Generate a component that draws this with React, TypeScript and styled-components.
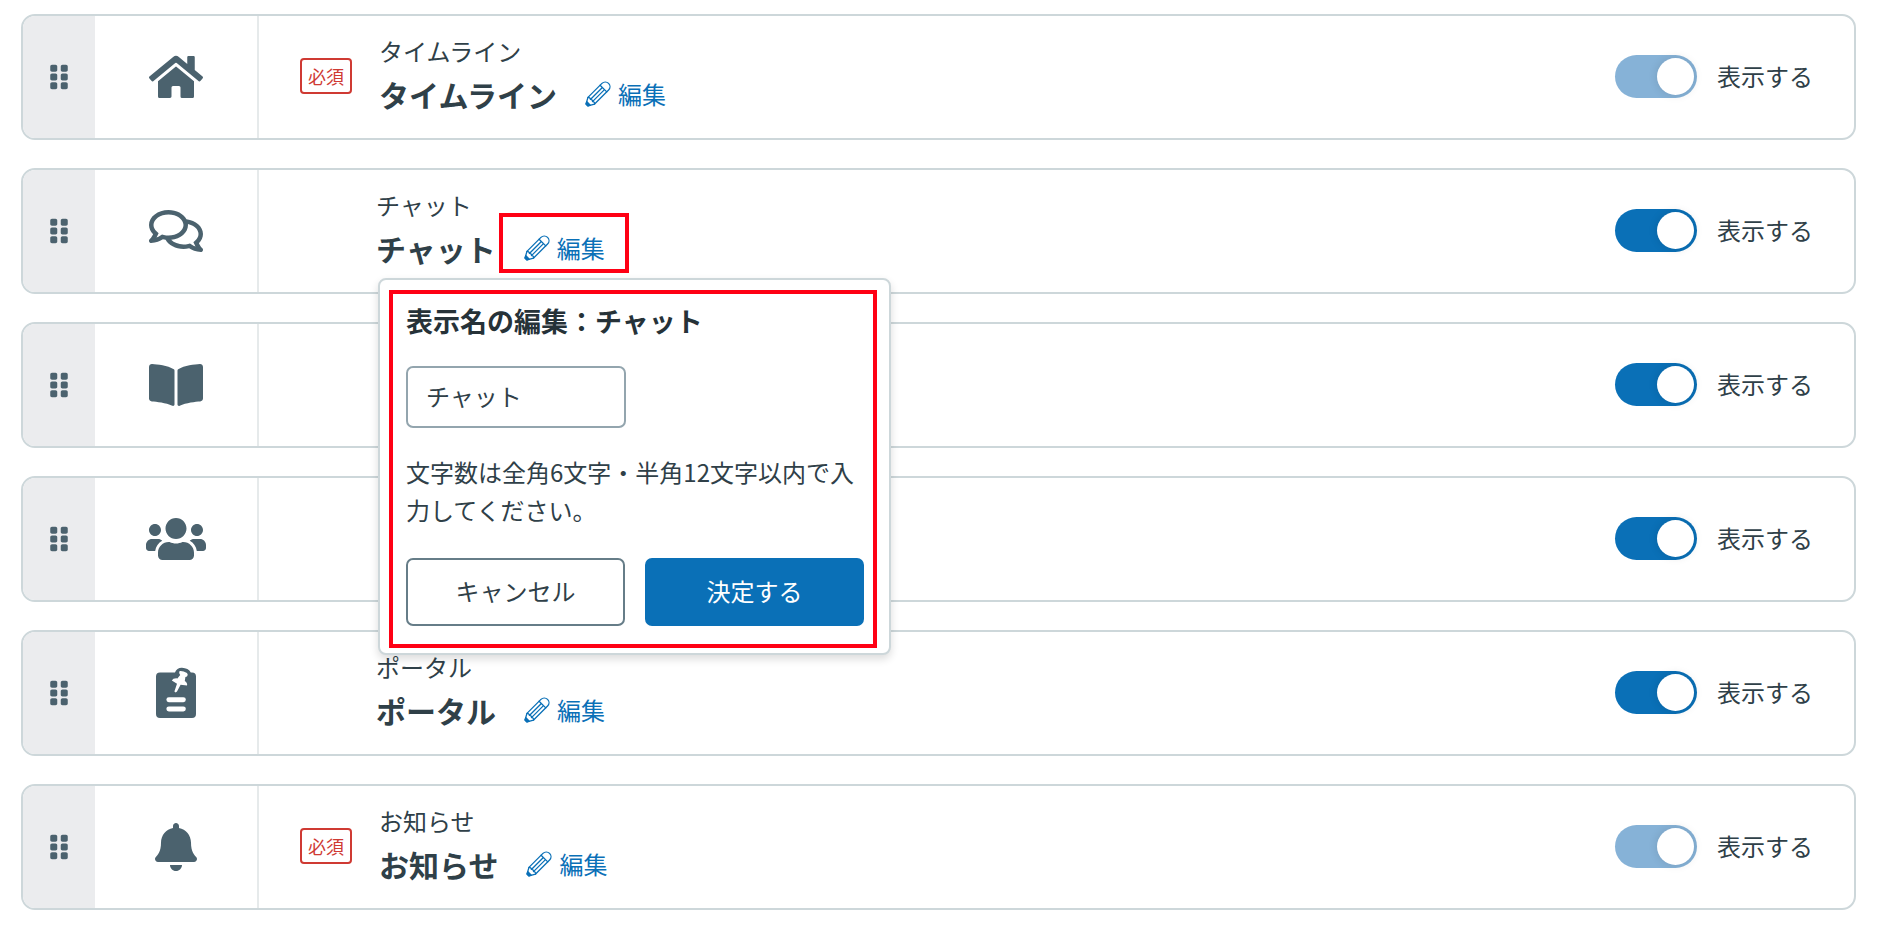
import React, { useState } from "react";
import styled, { createGlobalStyle, css } from "styled-components";
import {
  FaBell,
  FaBookOpen,
  FaGripVertical,
  FaHome,
  FaRegComments,
  FaUsers,
} from "react-icons/fa";

const color = {
  text: "#2f4048",
  icon: "#4b626e",
  line: "#cdd7da",
  divider: "#e6eaeb",
  handle: "#ebecee",
  blue: "#0a70b7",
  blueMuted: "#86b2d7",
  red: "#cf3a33",
  mark: "#ff0014",
};

const GlobalStyle = createGlobalStyle`
  *, *::before, *::after { box-sizing: border-box; }
  body {
    margin: 0;
    background: #fff;
    color: ${color.text};
    font-family: "Noto Sans CJK JP", "Liberation Sans", sans-serif;
    font-size: 24px;
    line-height: 36px;
  }
  button, input { font: inherit; color: inherit; }
`;

const List = styled.ul`
  display: flex;
  flex-direction: column;
  gap: 28px;
  margin: 0;
  padding: 14px 22px 26px 21px;
  list-style: none;
`;

const Row = styled.li`
  display: flex;
  min-height: 126px;
  border: 2px solid ${color.line};
  border-radius: 14px;
`;

const Handle = styled.button`
  display: flex;
  flex: none;
  align-items: center;
  justify-content: center;
  width: 72px;
  padding: 0;
  border: 0;
  border-radius: 12px 0 0 12px;
  background: ${color.handle};
  color: ${color.icon};
  cursor: grab;

  svg {
    width: 28px;
    height: 28px;
  }
`;

const IconCell = styled.div`
  display: flex;
  flex: none;
  align-items: center;
  justify-content: center;
  width: 164px;
  border-right: 2px solid ${color.divider};
  color: ${color.icon};

  svg {
    width: 60px;
    height: 48px;
    overflow: visible;
  }
`;

const Body = styled.div`
  display: flex;
  flex: 1;
  align-items: center;
  padding: 0 41px 2px;
`;

const BadgeSlot = styled.div`
  flex: none;
  min-width: 76px;
`;

const Badge = styled.span`
  display: block;
  width: 52px;
  margin-right: 27px;
  border: 2px solid ${color.red};
  border-radius: 4px;
  color: ${color.red};
  font-size: 18px;
  line-height: 32px;
  text-align: center;
`;

const Info = styled.div`
  position: relative;
  flex: 1;
`;

const OriginalName = styled.div`
  line-height: 36px;
`;

const TitleLine = styled.div`
  display: flex;
  align-items: center;
  gap: 29px;
  height: 50px;
`;

const Title = styled.strong`
  font-size: 30px;
  font-weight: 700;
`;

const EditButton = styled.button`
  position: relative;
  display: flex;
  align-items: center;
  gap: 8px;
  padding: 0;
  border: 0;
  background: none;
  color: ${color.blue};
  cursor: pointer;
`;

const markLine = css`
  position: absolute;
  border: 4px solid ${color.mark};
  pointer-events: none;
`;

const EditMark = styled.span`
  ${markLine}
  inset: -17px -24px -7px -26px;
`;

const PopupMark = styled.span`
  ${markLine}
  inset: 10px 12px 5px 9px;
`;

const SwitchLabel = styled.label`
  display: flex;
  flex: none;
  align-items: center;
  gap: 20px;
`;

const Switch = styled.input`
  display: flex;
  align-items: center;
  width: 82px;
  height: 43px;
  margin: 0;
  padding: 0 3px;
  border-radius: 22px;
  background: ${color.icon};
  appearance: none;
  cursor: pointer;

  &::before {
    content: "";
    width: 37px;
    height: 37px;
    border-radius: 50%;
    background: #fff;
    box-shadow: 0 0 10px rgba(0, 0, 0, 0.12);
  }
  &:checked {
    justify-content: flex-end;
    background: ${color.blue};
  }
  &:disabled {
    background: ${color.blueMuted};
    cursor: default;
  }
`;

const Popup = styled.form`
  position: absolute;
  top: calc(100% + 5px);
  left: 2px;
  z-index: 2;
  width: 513px;
  padding: 21px 25px 27px 26px;
  border: 2px solid ${color.line};
  border-radius: 8px;
  background: #fff;
  box-shadow: 0 4px 8px rgba(0, 0, 0, 0.14);
`;

const PopupTitle = styled.h2`
  margin: 0 0 25px;
  color: #263238;
  font-size: 27px;
  font-weight: 700;
  line-height: 40px;
`;

const NameInput = styled.input`
  display: block;
  width: 220px;
  height: 62px;
  padding: 0 18px 3px;
  border: 2px solid #93a5ae;
  border-radius: 7px;
  background: #fff;
`;

const Help = styled.p`
  margin: 25px 0 29px;
  line-height: 38px;
`;

const Actions = styled.div`
  display: flex;
  gap: 20px;
`;

const ActionButton = styled.button<{ $primary?: boolean }>`
  flex: 1;
  height: 68px;
  padding: 0 0 2px;
  border: 2px solid ${(p) => (p.$primary ? color.blue : "#667d88")};
  border-radius: 7px;
  background: ${(p) => (p.$primary ? color.blue : "#fff")};
  color: ${(p) => (p.$primary ? "#fff" : color.text)};
  cursor: pointer;
`;

const PencilIcon = () => (
  <svg width="24" height="24" viewBox="0 0 24 24" fill="none" stroke="currentColor" strokeWidth="1.3" strokeLinejoin="round" strokeLinecap="round" overflow="visible" aria-hidden="true">
    <g transform="translate(0.6 23.4) rotate(-45)">
      <path d="M0.6 -1.400 6.600 -4.700H26.400a4.700 4.700 0 0 1 0 9.400H6.600L0.600 1.400Z" />
      <path d="M6.600 -4.700Q8.400 -3 6.900 -1.500Q8.400 0 6.900 1.500Q8.400 3 6.600 4.700M23.800 -4.700V4.700M7.200 -1.500H23.800M7.200 1.500H23.800" />
      <path d="M0.6 -1.400 2.800 -2.400V2.400L0.600 1.400Z" fill="currentColor" />
    </g>
  </svg>
);

const PinnedNoteIcon = () => (
  <svg viewBox="0 2 40 48" aria-hidden="true">
    <path fill="currentColor" d="M4 5.6H19C20 2.5 23 .6 26 .8C30 1 33.4 2.6 34.8 5.6H36A4 4 0 0 1 40 9.600V47A4 4 0 0 1 36 51H4A4 4 0 0 1 0 47V9.600A4 4 0 0 1 4 5.600Z" />
    <path fill="#fff" d="M23.600 4Q27 3.600 31 6Q32.500 7.600 31 9.400L29.400 10L28.800 14Q31.800 16 31 18.600L24.600 17.800L21 24.600Q19.600 26.200 18.400 24.600L21 16.800L15.800 13.600Q17 11 21.400 11.400L24.200 8Q22.400 6 23.600 4Z" />
    <rect x="10.400" y="30.200" width="19.400" height="5" rx="2.400" fill="#fff" />
    <rect x="10.400" y="39.400" width="19.400" height="5" rx="2.400" fill="#fff" />
  </svg>
);

type Item = {
  id: string;
  icon: React.ReactNode;
  name?: string;
  required?: boolean;
};

const items: Item[] = [
  { id: "timeline", icon: <FaHome />, name: "タイムライン", required: true },
  { id: "chat", icon: <FaRegComments />, name: "チャット" },
  { id: "book", icon: <FaBookOpen /> },
  { id: "members", icon: <FaUsers /> },
  { id: "portal", icon: <PinnedNoteIcon />, name: "ポータル" },
  { id: "news", icon: <FaBell />, name: "お知らせ", required: true },
];

function EditPopup({ name, onClose }: { name: string; onClose: () => void }) {
  const [value, setValue] = useState(name);
  return (
    <Popup
      onSubmit={(e) => {
        e.preventDefault();
        onClose();
      }}
    >
      <PopupTitle id="popup-title">表示名の編集：{name}</PopupTitle>
      <NameInput
        type="text"
        aria-labelledby="popup-title"
        aria-describedby="popup-help"
        value={value}
        onChange={(e) => setValue(e.target.value)}
      />
      <Help id="popup-help">文字数は全角6文字・半角12文字以内で入力してください。</Help>
      <Actions>
        <ActionButton type="button" onClick={onClose}>キャンセル</ActionButton>
        <ActionButton type="submit" $primary>決定する</ActionButton>
      </Actions>
      <PopupMark />
    </Popup>
  );
}

export default function App() {
  const [editing, setEditing] = useState<string | null>("chat");
  return (
    <>
      <GlobalStyle />
      <List>
        {items.map(({ id, icon, name, required }) => (
          <Row key={id}>
            <Handle type="button" aria-roledescription="drag handle">
              <FaGripVertical />
            </Handle>
            <IconCell>{icon}</IconCell>
            <Body>
              <BadgeSlot>{required && <Badge>必須</Badge>}</BadgeSlot>
              <Info>
                {name && (
                  <>
                    <OriginalName>{name}</OriginalName>
                    <TitleLine>
                      <Title>{name}</Title>
                      <EditButton type="button" onClick={() => setEditing(id)}>
                        <PencilIcon />
                        編集
                        {editing === id && <EditMark />}
                      </EditButton>
                    </TitleLine>
                    {editing === id && (
                      <EditPopup name={name} onClose={() => setEditing(null)} />
                    )}
                  </>
                )}
              </Info>
              <SwitchLabel>
                <Switch type="checkbox" role="switch" defaultChecked disabled={required} />
                表示する
              </SwitchLabel>
            </Body>
          </Row>
        ))}
      </List>
    </>
  );
}
